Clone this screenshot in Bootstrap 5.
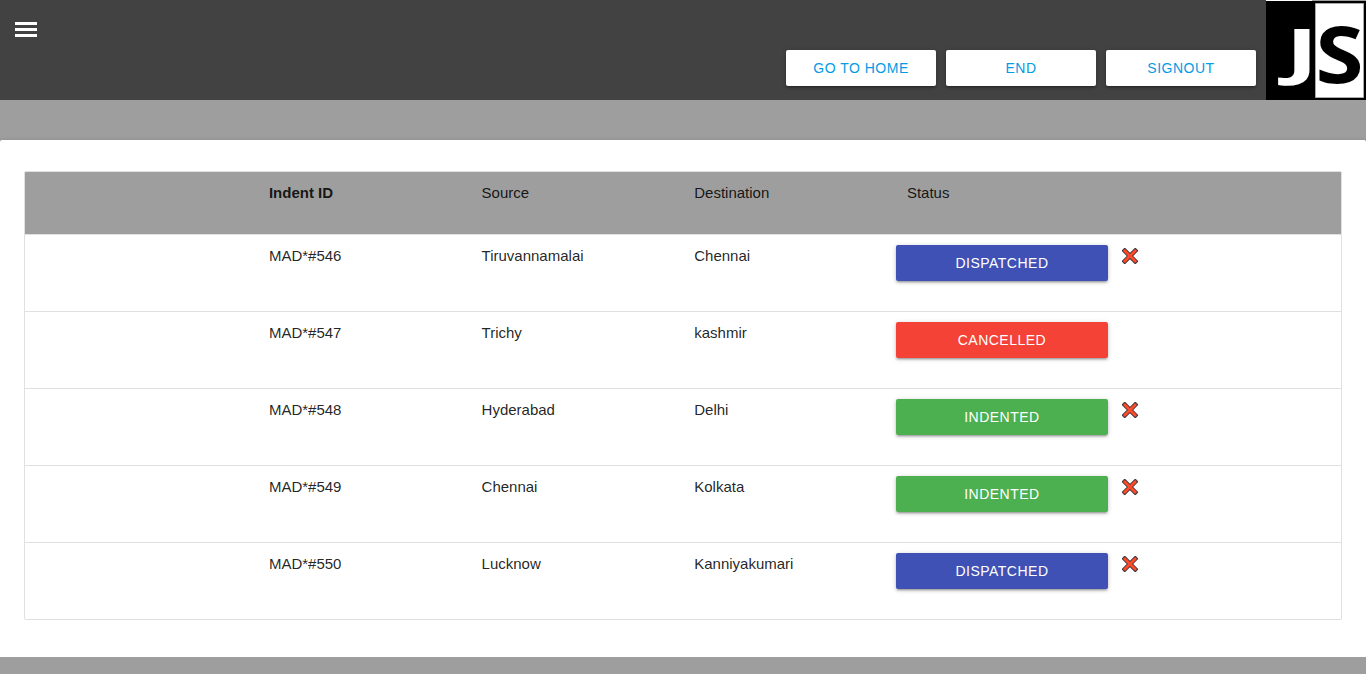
<!DOCTYPE html>
<html lang="en">
<head>
<meta charset="utf-8">
<meta name="viewport" content="width=device-width, initial-scale=1">
<title>Indents</title>
<link href="https://cdn.jsdelivr.net/npm/bootstrap@5.3.0/dist/css/bootstrap.min.css" rel="stylesheet">
<style>
  body { background: #9e9e9e; color: rgba(0,0,0,.87); font-family: "Liberation Sans", Arial, sans-serif; font-size: 15px; line-height: 1.5; }
  .topbar { height: 100px; background: #424242; }
  .menu-toggle { width: 22px; margin: 22px 0 0 15px; }
  .menu-toggle i { display: block; height: 3px; background: #fff; margin-bottom: 3px; }
  .btn-raised { height: 36px; line-height: 36px; padding: 0; border: 0; border-radius: 2px; font-size: 14px; letter-spacing: .5px; text-transform: uppercase;
    box-shadow: 0 2px 2px 0 rgba(0,0,0,.14), 0 3px 1px -2px rgba(0,0,0,.12), 0 1px 5px 0 rgba(0,0,0,.2); }
  .btn-nav { width: 150px; background: #fff; color: #039be5; margin: 50px 10px 0 0; }
  .btn-nav:hover { background: #fff; color: #039be5; }
  .stage { padding-top: 40px; overflow: hidden; }
  .panel { height: 517px; padding: 31px 24px 0; background: #fff; border-radius: 2px 2px 0 0; box-shadow: 0 1px 5px 0 rgba(0,0,0,.2); }
  .indents { --bs-list-group-border-color: #e0e0e0; --bs-list-group-border-radius: 2px; --bs-list-group-color: rgba(0,0,0,.87); }
  .indents .list-group-item { padding: 10px 20px 0; height: 77px; }
  .indents .list-group-item.heading { height: 64px; background: #9e9e9e; }
  .indents .row { --bs-gutter-x: 0; }
  .cell { padding: 0 11.25px; }
  .dispatched { background: #3f51b5; color: #fff; }
  .cancelled { background: #f44336; color: #fff; }
  .indented { background: #4caf50; color: #fff; }
  .remove { width: 16px; height: 16px; margin: 3px 0 0 2px; display: block; }
</style>
</head>
<body>
<svg class="d-none">
  <symbol id="cross" viewBox="0 0 16 16">
    <path d="M2.700 2.700 13.300 13.300M13.300 2.700 2.700 13.300" stroke="#40383a" stroke-width="4.600"  stroke-linecap="square" stroke-dasharray="none"/>
    <path d="M2.700 2.700 13.300 13.300M13.300 2.700 2.700 13.300" stroke="#ff4a2a" stroke-width="2.800" stroke-linecap="round"/>
  </symbol>
</svg>
<header class="topbar d-flex align-items-start">
  <a href="#" class="menu-toggle me-auto" aria-label="Menu"><i></i><i></i><i></i></a>
  <a href="#" class="btn btn-raised btn-nav">Go to home</a>
  <a href="#" class="btn btn-raised btn-nav">End</a>
  <a href="#" class="btn btn-raised btn-nav">Signout</a>
  <svg class="overflow-visible" width="100" height="100" viewBox="0 0 100 100" font-family="'Open Sans'" font-weight="700" font-size="80">
    <path d="M0 0H100V100H0z"/>
    <path d="M0 0H46V1H0z" fill="#fff"/><path d="M46 0H100V1H46z" fill="#9e9e9e"/>
    <path d="M49.500 3.500H97.500V97.500H49.500z" fill="#fff" stroke="#aaa"/>
    <text transform="translate(19.500 72.500) scale(1.240 .77)" x="0" y="0" fill="#fff">J</text>
    <text transform="translate(49.500 82.700) scale(1.090 .98)" x="0" y="0">S</text>
  </svg>
</header>
<main class="stage">
  <div class="panel">
    <ul class="list-group indents">
      <li class="list-group-item heading"><div class="row">
        <div class="col-2 offset-2 cell"><b>Indent ID</b></div><div class="col-2 cell">Source</div><div class="col-2 cell">Destination</div><div class="col-2 cell">Status</div>
      </div></li>
      <li class="list-group-item"><div class="row">
        <div class="col-2 offset-2 cell">MAD*#546</div><div class="col-2 cell">Tiruvannamalai</div><div class="col-2 cell">Chennai</div>
        <a href="#" class="col-2 btn btn-raised dispatched">Dispatched</a>
        <div class="col-2 cell"><svg class="remove"><use href="#cross"/></svg></div>
      </div></li>
      <li class="list-group-item"><div class="row">
        <div class="col-2 offset-2 cell">MAD*#547</div><div class="col-2 cell">Trichy</div><div class="col-2 cell">kashmir</div>
        <a href="#" class="col-2 btn btn-raised cancelled">Cancelled</a>
      </div></li>
      <li class="list-group-item"><div class="row">
        <div class="col-2 offset-2 cell">MAD*#548</div><div class="col-2 cell">Hyderabad</div><div class="col-2 cell">Delhi</div>
        <a href="#" class="col-2 btn btn-raised indented">Indented</a>
        <div class="col-2 cell"><svg class="remove"><use href="#cross"/></svg></div>
      </div></li>
      <li class="list-group-item"><div class="row">
        <div class="col-2 offset-2 cell">MAD*#549</div><div class="col-2 cell">Chennai</div><div class="col-2 cell">Kolkata</div>
        <a href="#" class="col-2 btn btn-raised indented">Indented</a>
        <div class="col-2 cell"><svg class="remove"><use href="#cross"/></svg></div>
      </div></li>
      <li class="list-group-item"><div class="row">
        <div class="col-2 offset-2 cell">MAD*#550</div><div class="col-2 cell">Lucknow</div><div class="col-2 cell">Kanniyakumari</div>
        <a href="#" class="col-2 btn btn-raised dispatched">Dispatched</a>
        <div class="col-2 cell"><svg class="remove"><use href="#cross"/></svg></div>
      </div></li>
    </ul>
  </div>
</main>
<script src="https://cdn.jsdelivr.net/npm/bootstrap@5.3.0/dist/js/bootstrap.bundle.min.js"></script>
</body>
</html>
